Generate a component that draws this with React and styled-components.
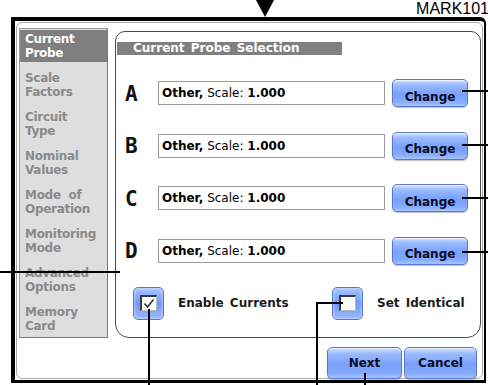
import React from "react";
import styled, { createGlobalStyle } from "styled-components";

const GlobalStyle = createGlobalStyle`
  html, body {
    margin: 0;
    padding: 0;
    background: #ffffff;
  }
  body {
    font-family: "DejaVu Sans", Verdana, sans-serif;
  }
`;

const probes = ["A", "B", "C", "D"];

const menuItems = [
  ["Current", "Probe"],
  ["Scale", "Factors"],
  ["Circuit", "Type"],
  ["Nominal", "Values"],
  ["Mode  of", "Operation"],
  ["Monitoring", "Mode"],
  ["Advanced", "Options"],
  ["Memory", "Card"],
];

// callout lines drawn over the screenshot (manual annotations)
const callouts = [
  { x: 462, y: 90, w: 26, h: 2 },
  { x: 462, y: 144, w: 26, h: 2 },
  { x: 462, y: 197, w: 26, h: 2 },
  { x: 462, y: 251, w: 26, h: 2 },
  { x: 0, y: 271, w: 120, h: 2 },
  { x: 148, y: 309, w: 2, h: 76 },
  { x: 316, y: 302, w: 27, h: 2 },
  { x: 316, y: 302, w: 2, h: 83 },
  { x: 364, y: 373, w: 2, h: 12 },
];

const App = () => {
  return (
    <Page>
      <GlobalStyle />
      <TopBar>
        <MarkLabel>MARK101</MarkLabel>
      </TopBar>
      <Frame>
        <Screen>
          <MainRow>
            <Sidebar>
              {menuItems.map(([l1, l2], i) => (
                <MenuItem key={l1} $active={i === 0}>
                  {l1}
                  <br />
                  {l2}
                </MenuItem>
              ))}
            </Sidebar>
            <Panel>
              <TitleBar>Current Probe Selection</TitleBar>
              <ProbeList>
                {probes.map((p) => (
                  <ProbeRow key={p}>
                    <ProbeLetter>{p}</ProbeLetter>
                    <ProbeField>
                      <b>Other,</b>&nbsp;Scale: <b>1.000</b>
                    </ProbeField>
                    <BlueButton $w={76} $h={28}>
                      Change
                    </BlueButton>
                  </ProbeRow>
                ))}
              </ProbeList>
              <CheckRow>
                <CheckGroup $w={199}>
                  <CheckBox>
                    <CheckInner>
                      <svg width="12" height="11" viewBox="0 0 12 11">
                        <path
                          d="M1.5 5.5 L4.5 9 L10.5 1.5"
                          fill="none"
                          stroke="#333"
                          strokeWidth="1.6"
                        />
                      </svg>
                    </CheckInner>
                  </CheckBox>
                  <CheckLabel>Enable Currents</CheckLabel>
                </CheckGroup>
                <CheckGroup>
                  <CheckBox>
                    <CheckInner />
                  </CheckBox>
                  <CheckLabel>Set Identical</CheckLabel>
                </CheckGroup>
              </CheckRow>
            </Panel>
          </MainRow>
          <ActionRow>
            <BlueButton $w={75} $h={32} $center>
              Next
            </BlueButton>
            <BlueButton $w={73} $h={32} $center>
              Cancel
            </BlueButton>
          </ActionRow>
        </Screen>
      </Frame>

      <Arrow width="18" height="17" viewBox="0 0 18 17">
        <path d="M0 0 L18 0 L9 17 Z" fill="#000" />
      </Arrow>
      {callouts.map((c, i) => (
        <CalloutLine key={i} $x={c.x} $y={c.y} $w={c.w} $h={c.h} />
      ))}
    </Page>
  );
};

const Page = styled.div`
  position: relative;
  width: 488px;
  height: 385px;
  overflow: hidden;
  background: #fff;
`;

const TopBar = styled.div`
  height: 17px;
  display: flex;
  justify-content: flex-end;
  align-items: flex-end;
`;

const MarkLabel = styled.div`
  font-family: "Liberation Sans", Arial, sans-serif;
  font-size: 16px;
  line-height: 16px;
  color: #000;
  margin-right: -1px;
`;

const Frame = styled.div`
  box-sizing: border-box;
  margin-left: 11px;
  width: 475px;
  height: 366px;
  border-left: 4px solid #000;
  border-top: 4px solid #000;
  border-right: 2px solid #000;
  border-bottom: 3px solid #000;
  border-top-right-radius: 6px;
  padding: 1px;
  display: flex;
`;

const Screen = styled.div`
  flex: 1;
  border: 1px solid #a8a8a8;
  border-radius: 6px;
  display: flex;
  flex-direction: column;
`;

const MainRow = styled.div`
  display: flex;
  align-items: flex-start;
  gap: 7px;
  padding: 5px 0 0 2px;
`;

const Sidebar = styled.div`
  box-sizing: border-box;
  width: 89px;
  height: 310px;
  background: #dedede;
  border: 1px solid #9c9c9c;
  border-right-color: #7a7a7a;
  border-bottom-color: #7a7a7a;
  padding-top: 1px;
  display: flex;
  flex-direction: column;
  gap: 7px;
`;

const MenuItem = styled.div`
  padding: 2px 0 2px 5px;
  font-size: 12px;
  font-weight: bold;
  line-height: 14px;
  letter-spacing: -0.3px;
  white-space: pre;
  color: ${(p) => (p.$active ? "#ffffff" : "#8a8a8a")};
  background: ${(p) => (p.$active ? "#7f7f7f" : "transparent")};
`;

const Panel = styled.div`
  box-sizing: border-box;
  width: 366px;
  height: 307px;
  margin-top: 3px;
  border: 1px solid #4a4a4a;
  border-radius: 10px 10px 14px 14px;
  display: flex;
  flex-direction: column;
`;

const TitleBar = styled.div`
  margin-top: 10px;
  margin-left: 1px;
  width: 225px;
  height: 13px;
  background: #808080;
  color: #fff;
  font-size: 12px;
  font-weight: bold;
  line-height: 13px;
  padding-left: 16px;
  box-sizing: border-box;
  word-spacing: 2px;
  white-space: nowrap;
`;

const ProbeList = styled.div`
  margin-top: 24px;
  display: flex;
  flex-direction: column;
  gap: 24.5px;
`;

const ProbeRow = styled.div`
  display: flex;
  align-items: center;
  height: 28px;
  padding-left: 9px;
`;

const ProbeLetter = styled.div`
  width: 33px;
  font-family: "DejaVu Sans Mono", monospace;
  font-size: 21px;
  font-weight: bold;
  line-height: 24px;
  color: #111;
  padding-top: 1px;
`;

const ProbeField = styled.div`
  box-sizing: border-box;
  width: 227px;
  height: 24px;
  margin-right: 7px;
  border: 1px solid #9a9a9a;
  background: #fff;
  padding-left: 3px;
  font-size: 12px;
  line-height: 22px;
  color: #000;
  white-space: nowrap;

  b {
    font-weight: bold;
  }
`;

const BlueButton = styled.div`
  box-sizing: border-box;
  width: ${(p) => p.$w}px;
  height: ${(p) => p.$h}px;
  border: 1px solid #5a78c8;
  border-radius: 5px;
  background: linear-gradient(
    to bottom,
    #d5e2ff 0%,
    #9cbcff 18%,
    #78a0fb 55%,
    #86acff 85%,
    #a9c4ff 100%
  );
  box-shadow: inset 0 1px 0 #eef3ff, 0 1px 1px rgba(0, 0, 0, 0.25);
  display: flex;
  justify-content: center;
  align-items: center;
  padding-top: ${(p) => (p.$center ? 0 : 7)}px;
  font-size: 12px;
  font-weight: bold;
  color: #0c0c22;
`;

const CheckRow = styled.div`
  margin-top: 22px;
  padding-left: 17px;
  display: flex;
  align-items: center;
`;

const CheckGroup = styled.div`
  display: flex;
  align-items: center;
  gap: 14px;
  width: ${(p) => (p.$w ? `${p.$w}px` : "auto")};
`;

const CheckBox = styled.div`
  box-sizing: border-box;
  width: 31px;
  height: 33px;
  border-radius: 5px;
  border: 1px solid #5a78c8;
  background: linear-gradient(to bottom, #a9c4ff 0%, #6f98f8 50%, #9ab9ff 100%);
  box-shadow: inset 0 0 3px #e4ecff;
  display: flex;
  align-items: center;
  justify-content: center;
`;

const CheckInner = styled.div`
  box-sizing: border-box;
  width: 17px;
  height: 16px;
  background: #fbfbf5;
  border-top: 2px solid #3a3a3a;
  border-left: 2px solid #3a3a3a;
  border-right: 1px solid #b8b8b8;
  border-bottom: 1px solid #b8b8b8;
  display: flex;
  align-items: center;
  justify-content: center;
`;

const CheckLabel = styled.div`
  font-size: 12px;
  font-weight: bold;
  color: #1a1a1a;
  word-spacing: 2px;
  white-space: nowrap;
`;

const ActionRow = styled.div`
  margin-top: 9px;
  padding-right: 5px;
  display: flex;
  justify-content: flex-end;
  gap: 2px;
`;

const Arrow = styled.svg`
  position: absolute;
  left: 256px;
  top: 0;
`;

const CalloutLine = styled.div`
  position: absolute;
  left: ${(p) => p.$x}px;
  top: ${(p) => p.$y}px;
  width: ${(p) => p.$w}px;
  height: ${(p) => p.$h}px;
  background: #000;
`;

export default App;
